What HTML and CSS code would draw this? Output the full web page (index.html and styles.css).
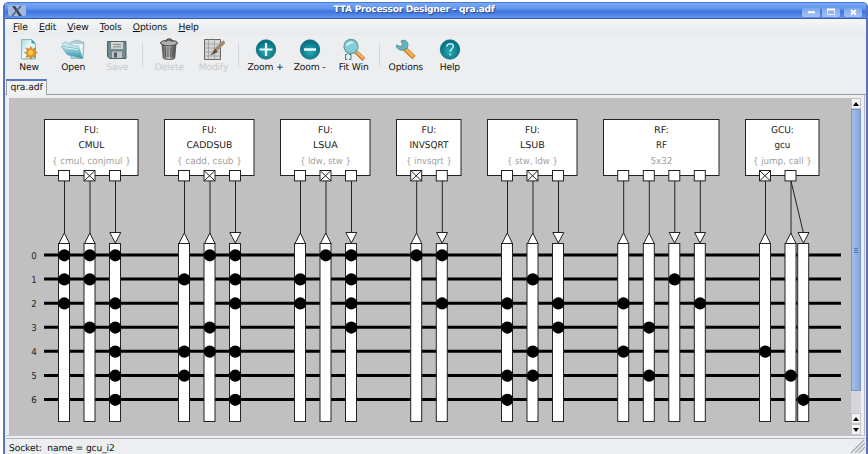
FILE: index.html
```
<!DOCTYPE html>
<html lang="en">
<head>
    <meta charset="UTF-8">
    <title>TTA Processor Designer - qra.adf</title>
    <link rel="stylesheet" href="styles.css">
</head>
<body>
    <div class="window">
        <div class="titlebar">
            <div class="app-icon">
                <svg width="18" height="12" viewBox="0 0 18 12"><path d="M4 1h3l7 10h-3z" fill="#384350"/><path d="M13 1L4 11" stroke="#4b5968" stroke-width="1.3"/></svg>
            </div>
            <div class="title">TTA Processor Designer - qra.adf</div>
            <div class="controls">
                <span class="control"><svg width="18" height="9"><path d="M6 4.2h7" stroke="#fff" stroke-width="2"/></svg></span>
                <span class="control"><svg width="18" height="9"><path d="M5.5 1.5h7v5h-7z" fill="none" stroke="#e4ebfb"/><path d="M5 1.5h8" stroke="#fff" stroke-width="2"/></svg></span>
                <span class="control close"><svg width="18" height="9"><path d="M7 2l5 4.5M12 2L7 6.5" stroke="#fff" stroke-width="1.7"/></svg></span>
            </div>
        </div>

        <div class="menubar">
            <span><u>F</u>ile</span>
            <span><u>E</u>dit</span>
            <span><u>V</u>iew</span>
            <span><u>T</u>ools</span>
            <span><u>O</u>ptions</span>
            <span><u>H</u>elp</span>
        </div>

        <div class="toolbar">
            <div class="tool">
                <svg width="22" height="23" viewBox="0 0 22 23">
                    <defs>
                        <linearGradient id="paper" x2="1" y2="1"><stop stop-color="#a5dbe3"/><stop offset=".5" stop-color="#effafa"/><stop offset="1" stop-color="#9fd0d8"/></linearGradient>
                        <linearGradient id="folder" x2="0" y2="1"><stop stop-color="#b5e0e9"/><stop offset="1" stop-color="#2d91ab"/></linearGradient>
                        <radialGradient id="ball" cy=".6"><stop stop-color="#2ab0b4"/><stop offset="1" stop-color="#087286"/></radialGradient>
                        <linearGradient id="bin"><stop stop-color="#555"/><stop offset=".45" stop-color="#c4c4c4"/><stop offset="1" stop-color="#484848"/></linearGradient>
                    </defs>
                    <path d="M3.5 1.5h10l4 4v15.500h-14z" fill="url(#paper)" stroke="#7fb9c3"/>
                    <path d="M13.500 1.500v4h4z" fill="#2e9ab0"/>
                    <path d="M12.800 8.300l1.500 3 3.200-1.200-1.200 3.100 3 1.500-3 1.500 1.200 3.200-3.200-1.200-1.500 3-1.500-3-3.100 1.200 1.200-3.200-3-1.500 3-1.500-1.200-3.100 3.100 1.200z" fill="#e3941b" stroke="#b56c15" stroke-width=".5"/>
                    <circle cx="12.800" cy="14.600" r="2.600" fill="#ffc94f"/>
                </svg>
                <span>New</span>
            </div>
            <div class="tool">
                <svg width="26" height="23" viewBox="0 0 26 23">
                    <path d="M10 4.500l7-2.500 7 2.500-1 16H11z" fill="#b2cfd4" stroke="#84aeb6" stroke-width=".7"/>
                    <path d="M11 5.500l12 1-1 12H12z" fill="#f0fafb"/>
                    <path d="M2 5.500l4-2 4 3 9 1.500v8l-10 1z" fill="#c3e2e7" stroke="#8dbfc9" stroke-width=".6"/>
                    <path d="M1.500 8.500l18 2.500 3 9.500L7 16.500z" fill="url(#folder)" stroke="#4a9fb2" stroke-width=".6"/>
                    <path d="M3 9.500l16 2.200" stroke="#d7f1f5"/>
                </svg>
                <span>Open</span>
            </div>
            <div class="tool disabled">
                <svg width="22" height="23" viewBox="0 0 22 23">
                    <path d="M1.500 3.500h18.500v17h-16.500l-2-2z" fill="#6f8b92" stroke="#4e6266"/>
                    <path d="M5 4h12v7H5z" fill="#d1d4d2"/>
                    <path d="M7 6.500h8M7 8.800h8" stroke="#858b8b"/>
                    <path d="M6 13.500h10v6.500H6z" fill="#c2c5c5"/>
                    <path d="M8 14.500h3v5H8z" fill="#4f5e62"/>
                </svg>
                <span>Save</span>
            </div>
            <div class="separator"></div>
            <div class="tool disabled">
                <svg width="22" height="23" viewBox="0 0 22 23">
                    <path d="M4 6h14l-1.200 14c-.3 2-11.300 2-11.600 0z" fill="url(#bin)" stroke="#444" stroke-width=".7"/>
                    <path d="M7 9l.8 10M10 9v10M13 9l-.2 10M15.500 9l-.8 10" stroke="#4d4d4d"/>
                    <ellipse cx="11" cy="5" rx="8.500" ry="2.800" fill="#b1b1b1" stroke="#454545"/>
                    <path d="M8 4c0-4 6-4 6 0" fill="none" stroke="#555" stroke-width="1.300"/>
                </svg>
                <span>Delete</span>
            </div>
            <div class="tool disabled">
                <svg width="24" height="23" viewBox="0 0 24 23">
                    <path d="M3.500 1.500h16v20h-16z" fill="#d5d7d5" stroke="#666"/>
                    <path d="M3.500 6h16M3.500 10h16M3.500 14h16M3.500 18h16M7.500 1.500v20M13.500 1.500v20" stroke="#9b9d9c" stroke-width=".8"/>
                    <path d="M23.500 3.500L13 13.500" stroke="#a5896a" stroke-width="3.500"/>
                    <path d="M14.500 11l2 3.300L9 17.500z" fill="#594e40"/>
                </svg>
                <span>Modify</span>
            </div>
            <div class="separator"></div>
            <div class="tool">
                <svg width="22" height="23" viewBox="0 0 22 23">
                    <circle cx="11" cy="11.500" r="9.700" fill="url(#ball)" stroke="#11697a" stroke-width=".8"/>
                    <path d="M4.500 11.500h13M11 5v13" stroke="#effcfd" stroke-width="2.200"/>
                </svg>
                <span>Zoom +</span>
            </div>
            <div class="tool">
                <svg width="22" height="23" viewBox="0 0 22 23">
                    <circle cx="11" cy="11.500" r="9.700" fill="url(#ball)" stroke="#11697a" stroke-width=".8"/>
                    <path d="M5 11.500h12" stroke="#effcfd" stroke-width="2.500"/>
                </svg>
                <span>Zoom -</span>
            </div>
            <div class="tool">
                <svg width="24" height="23" viewBox="0 0 24 23">
                    <path d="M13 13l9 8.500" stroke="#bd752b" stroke-width="4"/>
                    <path d="M14 13.500l8 7.500" stroke="#f7b85c" stroke-width="2.200"/>
                    <circle cx="9" cy="8.500" r="7" fill="#83cdd7" stroke="#6a9fa6" stroke-width="1.300"/>
                    <path d="M5 8a4 4 0 0 1 6-3" fill="none" stroke="#d4f2f4" stroke-width="2"/>
                    <path d="M5.500 16.500h-2v5h2M7 16.500h2v5H7" fill="none" stroke="#397c8c"/>
                </svg>
                <span>Fit Win</span>
            </div>
            <div class="separator"></div>
            <div class="tool">
                <svg width="22" height="23" viewBox="0 0 22 23">
                    <path d="M10 11l9 8.500" stroke="#c17928" stroke-width="4.500"/>
                    <path d="M11 11.500l7.500 7.300" stroke="#f6b34e" stroke-width="2.800"/>
                    <path d="M6 3c3-2 7 .5 7 3.500 0 1.500-.5 2.500-1 3.500l-3 2C5 13 1 10.500 1.500 7L5 8.500 8 7z" fill="#65b4bf" stroke="#44838e" stroke-width=".8"/>
                </svg>
                <span>Options</span>
            </div>
            <div class="tool">
                <svg width="22" height="23" viewBox="0 0 22 23">
                    <circle cx="11" cy="11.500" r="9.700" fill="url(#ball)" stroke="#11697a" stroke-width=".8"/>
                    <path d="M7.800 8.800c.2-4.300 6.900-4 6.500-.3-.3 2.300-3 2.300-3 5.300" fill="none" stroke="#c8eff1" stroke-width="1.500"/>
                    <circle cx="11.200" cy="16.600" r="1" fill="#c8eff1"/>
                </svg>
                <span>Help</span>
            </div>
        </div>

        <div class="tabs">
            <div class="tab">qra.adf</div>
        </div>

        <div class="content">
            <svg id="canvas" class="canvas" width="842" height="337" viewBox="9 98 842 337"></svg>
            <div class="scrollbar">
                <div class="arrow"><i class="up"></i></div>
                <div class="thumb"><i></i><i></i><i></i></div>
                <div class="track"></div>
                <div class="arrow"><i class="up"></i></div>
                <div class="arrow"><i class="down"></i></div>
            </div>
        </div>

        <div class="statusbar">
            <span>Socket:&nbsp; name = gcu_i2</span>
            <svg class="grip" width="15" height="14"><path d="M1 14L14 1M5 14L15 4M9 14L15 8" stroke="#a8a9ab" stroke-width="1.300"/></svg>
        </div>
    </div>

    <script src="script.js"></script>
</body>
</html>
```
FILE: styles.css
```
body {
    margin: 0;
    background-color: #fff;
    font-family: "DejaVu Sans", sans-serif;
    font-size: 9.2px;
    letter-spacing: -0.15px;
    text-rendering: geometricPrecision;
    color: #111;
}

.window {
    box-sizing: border-box;
    width: 865px;
    height: 452px;
    margin: 2px 0 0 3px;
    display: flex;
    flex-direction: column;
    overflow: hidden;
    border-left: 2px solid #5672c2;
    border-right: 2px solid #5672c2;
    border-radius: 5px 5px 0 0;
    background-color: #eceef0;
}

.titlebar {
    height: 17px;
    flex: none;
    display: flex;
    align-items: center;
    margin: 0 -2px;
    box-sizing: border-box;
    border-top: 1px solid #4679d8;
    border-bottom: 1px solid #3359b5;
    background: linear-gradient(#78a9f5, #5f94ed 40%, #3e74dc 55%, #6296ef);
}

.app-icon {
    width: 18px;
    height: 11px;
    margin-left: 5px;
    border-radius: 2px;
    background-color: #a2b7de;
}

.app-icon svg {
    display: block;
}

.title {
    flex: 1;
    text-align: center;
    font-size: 9.1px;
    letter-spacing: -0.25px;
    font-weight: bold;
    line-height: 15px;
    color: #fff;
    text-shadow: 1px 1px 1px #29478c;
}

.controls {
    display: flex;
    gap: 2px;
    margin: 3px 6px 0 0;
}

.control {
    width: 18px;
    height: 9px;
    border-radius: 2px;
    background: linear-gradient(#7da5ed, #a7c2f6);
}

.control.close {
    margin-left: 2px;
}

.control svg {
    display: block;
}

.menubar {
    height: 16px;
    flex: none;
    display: flex;
    gap: 11.2px;
    padding-left: 8px;
    line-height: 17px;
    background: linear-gradient(#f5f6f8, #e8eaec);
}

.toolbar {
    height: 44px;
    flex: none;
    display: flex;
    padding: 3px 0 0 2px;
    box-sizing: border-box;
}

.tool {
    width: 44.1px;
    display: flex;
    flex-direction: column;
    align-items: center;
    line-height: 13px;
    white-space: nowrap;
}

.disabled {
    color: #c9cbcd;
}

.separator {
    width: 1px;
    height: 24px;
    margin: 5px 4px 0 3px;
    background-color: #d3d5d7;
}

.tabs {
    height: 16px;
    flex: none;
    box-sizing: border-box;
    display: flex;
    border-bottom: 1px solid #9c9da0;
}

.tab {
    width: 41px;
    height: 16px;
    margin-left: 1px;
    border: 1px solid #a0a1a4;
    border-top: 2px solid #5874c8;
    border-bottom: 0;
    box-sizing: border-box;
    text-align: center;
    line-height: 14px;
    letter-spacing: -0.1px;
    background-color: #f1f2f4;
}

.content {
    flex: none;
    height: 341px;
    display: flex;
    box-sizing: border-box;
    margin: 0 1px;
    padding: 3px 2px 1px 3px;
    background-color: #eceef0;
    border-bottom: 1px solid #c4c5cc;
    border-right: 1px solid #b6b7bb;
}

.canvas {
    flex: none;
    letter-spacing: 0;
    background-color: #c0c0c0;
}

.scrollbar {
    width: 10px;
    height: 337px;
    display: flex;
    flex-direction: column;
    background-color: #d5d6dc;
}

.arrow {
    height: 11px;
    box-sizing: border-box;
    display: flex;
    align-items: center;
    justify-content: center;
    border: 1px solid #c4c5c8;
    background-color: #f3f4f5;
}

.up,
.down {
    border-left: 3px solid transparent;
    border-right: 3px solid transparent;
}

.up {
    border-bottom: 4px solid #000;
}

.down {
    border-top: 4px solid #000;
}

.thumb {
    height: 282px;
    box-sizing: border-box;
    display: flex;
    flex-direction: column;
    align-items: center;
    justify-content: center;
    gap: 1px;
    border: 1px solid #7894c8;
    background: linear-gradient(to right, #a6bfe8, #86a7dc);
}

.thumb i {
    width: 4px;
    height: 1px;
    background-color: #5377b5;
}

.track {
    flex: 1;
}

.statusbar {
    flex: 1;
    display: flex;
    justify-content: space-between;
    margin: 2px 1px 0;
    padding-left: 3px;
    border-top: 1px solid #b4b5ba;
    line-height: 19px;
}

/* diagram */
.bus {
    stroke: #000;
    stroke-width: 3;
}

.shape {
    fill: #fff;
    stroke: #222;
    stroke-width: 1;
}

.wire {
    stroke: #222;
    stroke-width: 1;
}

.label {
    fill: #222;
    font-size: 9.4px;
    text-anchor: middle;
}

.operations {
    fill: #a0a0a0;
}
```
FILE: script.js
```
var BUS_COUNT = 7;

// sockets: x, direction, connected buses; trigger ports are crossed
var units = [
    { x: 44, width: 94, type: 'FU:', name: 'CMUL', nameWidth: 26, ops: '{ cmul, conjmul }', opsWidth: 79,
      ports: [[64, 'in', [0, 1, 2]], [89.5, 'in', [0, 1, 3], true], [115, 'out', [0, 2, 3, 4, 5, 6]]] },
    { x: 164, width: 90, type: 'FU:', name: 'CADDSUB', nameWidth: 46, ops: '{ cadd, csub }', opsWidth: 65,
      ports: [[184, 'in', [1, 4, 5]], [209.5, 'in', [0, 3, 4], true], [235, 'out', [0, 1, 2, 4, 5, 6]]] },
    { x: 280, width: 90, type: 'FU:', name: 'LSUA', nameWidth: 25, ops: '{ ldw, stw }', opsWidth: 51,
      ports: [[300, 'in', [1, 2]], [325.5, 'in', [0], true], [351, 'out', [0, 1, 2, 3]]] },
    { x: 396, width: 65, type: 'FU:', name: 'INVSQRT', nameWidth: 39, ops: '{ invsqrt }', opsWidth: 46,
      ports: [[416.2, 'in', [0], true], [441.8, 'out', [0, 2]]] },
    { x: 487, width: 90, type: 'FU:', name: 'LSUB', nameWidth: 25, ops: '{ stw, ldw }', opsWidth: 51,
      ports: [[507, 'in', [2, 3, 5, 6]], [532.5, 'in', [1, 4, 5], true], [558, 'out', [2, 3]]] },
    { x: 603, width: 116, type: 'RF:', name: 'RF', nameWidth: 11, ops: '5x32', opsWidth: 22,
      ports: [[623.2, 'in', [2, 4]], [648.8, 'in', [3, 5]], [674.3, 'out', [1]], [699.8, 'out', [2]]] },
    { x: 745, width: 74, type: 'GCU:', name: 'gcu', nameWidth: 16, ops: '{ jump, call }', opsWidth: 59,
      ports: [[765, 'in', [4], true], [790.5, 'in', [5]], [803.2, 'out', [6], false, 790.5]] }
];

var canvas = document.getElementById('canvas');

function draw(tag, attrs, text) {
    var el = document.createElementNS('http://www.w3.org/2000/svg', tag);
    for (var key in attrs) {
        el.setAttribute(key, attrs[key]);
    }
    if (text) {
        el.textContent = text;
    }
    canvas.appendChild(el);
}

function label(text, x, y, width, extra) {
    draw('text', { 'class': 'label ' + (extra || ''), x: x, y: y, textLength: width, lengthAdjust: 'spacingAndGlyphs' }, text);
}

function busY(i) {
    return 255 + i * 24.08;
}

for (var i = 0; i < BUS_COUNT; i++) {
    label(String(i), 34, busY(i) + 3.8, 5.5);
    draw('line', { 'class': 'bus', x1: 44, x2: 841, y1: busY(i), y2: busY(i) });
}

units.forEach(function(unit) {
    var center = unit.x + unit.width / 2 + 0.4;
    draw('rect', { 'class': 'shape', x: unit.x + 0.5, y: 119.5, width: unit.width - 0.5, height: 56 });
    label(unit.type, center, 132.6, unit.type === 'GCU:' ? 23 : 15);
    label(unit.name, center, 148.2, unit.nameWidth);
    label(unit.ops, center, 163.8, unit.opsWidth, 'operations');

    unit.ports.forEach(function(port) {
        var x = port[0];
        var portX = port[4] || x;
        draw('line', { 'class': 'wire', x1: portX + 0.5, y1: 181, x2: x + 0.5, y2: 234 });
        if (!port[4]) {
            draw('rect', { 'class': 'shape', x: x - 5.5, y: 170.5, width: 11, height: 10.4 });
        }
        if (port[3]) {
            draw('path', { 'class': 'wire', d: 'M' + (x - 5) + ' 171l10 9.5m0 -9.5l-10 9.5' });
        }
        draw('path', {
            'class': 'shape',
            d: port[1] === 'in'
                ? 'M' + (x - 5) + ' 243.5L' + (x + 0.3) + ' 233L' + (x + 5.5) + ' 243.5z'
                : 'M' + (x - 5.2) + ' 232.5H' + (x + 5.8) + 'L' + (x + 0.3) + ' 243z'
        });
        draw('rect', { 'class': 'shape', x: x - 5.5, y: 243.5, width: 11, height: 178 });
        port[2].forEach(function(bus) {
            draw('circle', { cx: x + 0.3, cy: busY(bus) + 0.3, r: 6.1 });
        });
    });
});
```
